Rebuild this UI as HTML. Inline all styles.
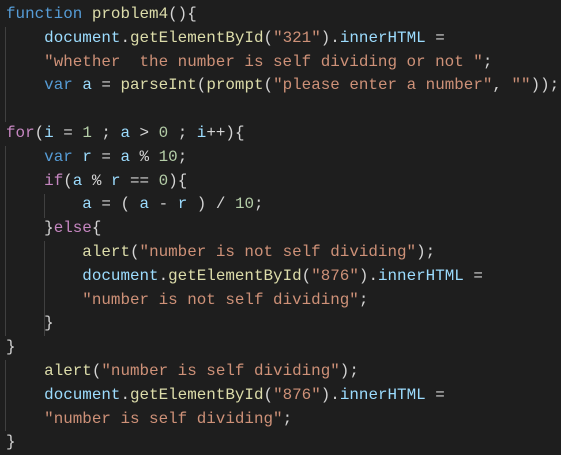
<!DOCTYPE html>
<html><head><meta charset="utf-8"><style>
html,body{margin:0;padding:0;background:#1e1e1e;width:561px;height:454px;overflow:hidden}
#c{position:absolute;left:6px;top:3px;font-family:"Liberation Mono",monospace;font-size:15.9px;line-height:23.8px;color:#d4d4d4;white-space:pre}
.k{color:#569cd6}.p{color:#c586c0}.v{color:#9cdcfe}.f{color:#dcdcaa}.s{color:#ce9178}.n{color:#b5cea8}
.y,.m,.b{color:#d4d4d4}
.g{position:absolute;width:1px;background:#404040}
</style></head><body>
<div class="g" style="left:5px;top:27px;height:95px"></div>
<div class="g" style="left:5px;top:146px;height:190px"></div>
<div class="g" style="left:44px;top:194px;height:24px"></div>
<div class="g" style="left:44px;top:241px;height:95px"></div>
<div class="g" style="left:5px;top:360px;height:71px"></div>
<div id="c"><span class="k">function</span> <span class="f">problem4</span><span class="y">(){</span>
    <span class="v">document</span>.<span class="f">getElementById</span><span class="m">(</span><span class="s">"321"</span><span class="m">)</span>.<span class="v">innerHTML</span> =
    <span class="s">"whether  the number is self dividing or not "</span>;
    <span class="k">var</span> <span class="v">a</span> = <span class="f">parseInt</span><span class="m">(</span><span class="f">prompt</span><span class="b">(</span><span class="s">"please enter a number"</span>, <span class="s">""</span><span class="b">)</span><span class="m">)</span>;

<span class="p">for</span><span class="y">(</span><span class="v">i</span> = <span class="n">1</span> ; <span class="v">a</span> &gt; <span class="n">0</span> ; <span class="v">i</span>++<span class="y">){</span>
    <span class="k">var</span> <span class="v">r</span> = <span class="v">a</span> % <span class="n">10</span>;
    <span class="p">if</span><span class="m">(</span><span class="v">a</span> % <span class="v">r</span> == <span class="n">0</span><span class="m">){</span>
        <span class="v">a</span> = <span class="b">(</span> <span class="v">a</span> - <span class="v">r</span> <span class="b">)</span> / <span class="n">10</span>;
    <span class="m">}</span><span class="p">else</span><span class="m">{</span>
        <span class="f">alert</span><span class="b">(</span><span class="s">"number is not self dividing"</span><span class="b">)</span>;
        <span class="v">document</span>.<span class="f">getElementById</span><span class="b">(</span><span class="s">"876"</span><span class="b">)</span>.<span class="v">innerHTML</span> =
        <span class="s">"number is not self dividing"</span>;
    <span class="m">}</span>
<span class="y">}</span>
    <span class="f">alert</span><span class="m">(</span><span class="s">"number is self dividing"</span><span class="m">)</span>;
    <span class="v">document</span>.<span class="f">getElementById</span><span class="m">(</span><span class="s">"876"</span><span class="m">)</span>.<span class="v">innerHTML</span> =
    <span class="s">"number is self dividing"</span>;
<span class="y">}</span></div>
</body></html>
